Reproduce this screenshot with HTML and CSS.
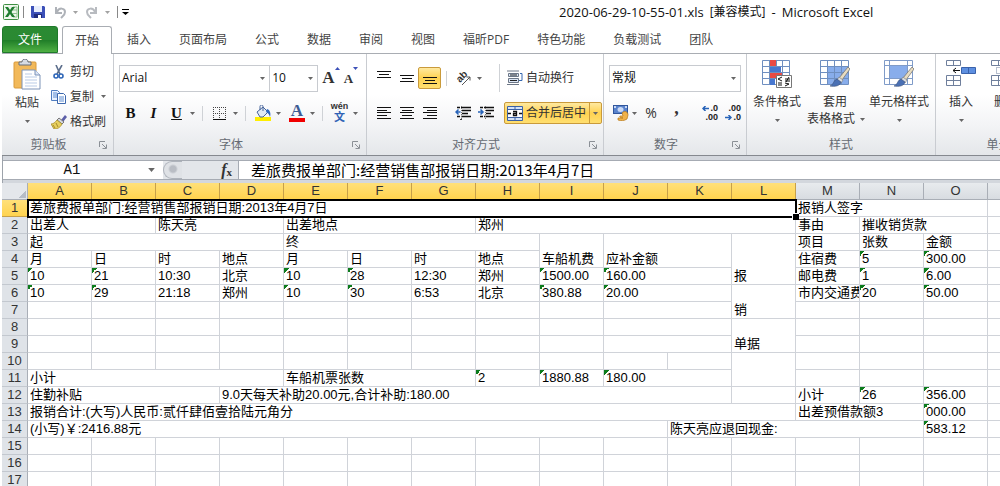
FILE: index.html
```html
<!DOCTYPE html>
<html lang="zh-CN">
<head>
<meta charset="utf-8">
<title>2020-06-29-10-55-01.xls - Microsoft Excel</title>
<link rel="stylesheet" href="styles.css">
</head>
<body>
<svg class="defs" aria-hidden="true">
  <symbol id="caret" viewBox="0 0 5 3"><path d="M0 0H5L2.5 3Z" fill="#666"/></symbol>
  <symbol id="launch" viewBox="0 0 8 8"><path d="M.5 6V.5H6M3 3l4 4M7.500 3.500V7.500H3.500" fill="none" stroke="#8b9096"/></symbol>
  <symbol id="brush" viewBox="0 0 20 20"><path d="M18 0l2 2-8 11-3-2Z" fill="#e8dcc0" stroke="#777" stroke-width=".8"/><path d="M9 10l4 3-2 3-4-3Z" fill="#d9dde2" stroke="#777" stroke-width=".6"/><path d="M7 12l4 3c-1 4-6 5-11 4 4-1 3-6 7-7Z" fill="#4a70b4" stroke="#3b5078" stroke-width=".6"/></symbol>
</svg>
<div class="window">
  <header class="titlebar">
    <div class="quick">
      <svg class="logo" width="16" height="16" viewBox="0 0 16 16"><rect x=".5" y=".5" width="15" height="15" rx="1" fill="#eef7ec" stroke="#3f8f43"/><path d="M10 3h4v10h-4M10 6h4M10 9.500h4" fill="none" stroke="#8fc28f"/><path d="M2 3h3l2 3 2-3h3L8.500 8l3.500 5H9L7 10l-2 3H2l3.500-5Z" fill="#1f7d30"/></svg>
      <span class="bar"></span>
      <button class="flat" aria-label="保存"><svg width="14" height="14" viewBox="0 0 14 14"><path d="M0 1h13l1 1v11H1l-1-1Z" fill="#3c50b8"/><path d="M3 1h8v6H3Z" fill="#e8eefc"/><path d="M3 9h8v4H3Z" fill="#1f2c7c"/><path d="M7 10h3v3H7Z" fill="#fff"/></svg></button>
      <button class="flat undo" aria-label="撤消"><svg width="12" height="13" viewBox="0 0 12 13"><path d="M2 1v6h6" fill="none" stroke="#aeb2b8" stroke-width="2"/><path d="M3 6c2-5 8-4 8 0 0 3-2 4-4 6" fill="none" stroke="#aeb2b8" stroke-width="2"/></svg></button>
      <svg class="caret pale" width="5" height="3"><use href="#caret"/></svg>
      <button class="flat redo" aria-label="恢复"><svg width="12" height="13" viewBox="0 0 12 13"><path d="M10 1v6H4" fill="none" stroke="#b8bbc0" stroke-width="2"/><path d="M9 6C7 1 1 2 1 6c0 3 2 4 4 6" fill="none" stroke="#b8bbc0" stroke-width="2"/></svg></button>
      <svg class="caret pale" width="5" height="3"><use href="#caret"/></svg>
      <span class="bar"></span>
      <button class="flat more" aria-label="自定义快速访问工具栏"><svg width="7" height="6" viewBox="0 0 7 6"><path d="M0 0h7v1H0ZM0 3h7L3.500 6Z"/></svg></button>
    </div>
    <h1 class="title"><span>2020-06-29-10-55-01.xls</span><small>[兼容模式]</small><span>-</span><span>Microsoft Excel</span></h1>
  </header>

  <nav class="tabs">
    <button class="tab file">文件</button>
    <button class="tab active">开始</button>
    <button class="tab">插入</button>
    <button class="tab">页面布局</button>
    <button class="tab">公式</button>
    <button class="tab">数据</button>
    <button class="tab">审阅</button>
    <button class="tab">视图</button>
    <button class="tab">福昕PDF</button>
    <button class="tab">特色功能</button>
    <button class="tab">负载测试</button>
    <button class="tab">团队</button>
  </nav>

  <div class="ribbon">
    <section class="group clipboard">
      <div class="body split">
        <button class="big paste">
          <svg width="28" height="31" viewBox="0 0 28 31"><rect x="1" y="3" width="22" height="26" rx="1" fill="#f2b95a" stroke="#d99a3a"/><path d="M6 6V3h3c0-4 6-4 6 0h3v3Z" fill="#d7dbe2" stroke="#666e7a"/><path d="M9 11h13l5 5v14H9Z" fill="#fff" stroke="#7d93b8"/><path d="M22 11v5h5" fill="#dbe5f5" stroke="#7d93b8"/><path d="M12 15h7M12 18h12M12 21h12M12 24h12M12 27h12" stroke="#b9cbe6"/></svg>
          <span>粘贴</span>
          <svg class="caret" width="5" height="3"><use href="#caret"/></svg>
        </button>
        <div class="stack">
          <button class="small"><svg width="16" height="14" viewBox="0 0 16 14"><path d="M5 0l4 9M11 0L6 9" stroke="#5d6f8c" stroke-width="1.600"/><circle cx="5" cy="11" r="2" fill="none" stroke="#2f66b8" stroke-width="1.600"/><circle cx="10" cy="11" r="2" fill="none" stroke="#2f66b8" stroke-width="1.600"/></svg>剪切</button>
          <button class="small"><svg width="16" height="14" viewBox="0 0 16 14"><path d="M.5.5h6l2 2v8h-8Z" fill="#eaf2ff" stroke="#4f7cc0"/><path d="M2 3h4M2 5h4M2 7h4" stroke="#5a8ad0"/><path d="M6.500 3.500h6l2 2v8h-8Z" fill="#fff" stroke="#3c67ad"/><path d="M8 7h5M8 9h5M8 11h5" stroke="#5a8ad0"/></svg>复制<svg class="caret" width="5" height="3"><use href="#caret"/></svg></button>
          <button class="small"><svg width="16" height="14" viewBox="0 0 16 14"><path d="M14 0l2 2-4 5-2-2Z" fill="#5c5fa8"/><path d="M8 3l5 4-2 2-5-4Z" fill="#d5d8e2" stroke="#777"/><path d="M6 5l5 4c-2 4-5 5-8 5L0 9c3 0 4-2 6-4Z" fill="#e7cf5e" stroke="#a58b2a" stroke-width=".8"/><path d="M2 10l2 3M5 8l2 4" stroke="#a58b2a"/></svg>格式刷</button>
        </div>
      </div>
      <footer><span>剪贴板</span><button class="launch" aria-label="剪贴板选项"><svg width="8" height="8"><use href="#launch"/></svg></button></footer>
    </section>

    <section class="group font">
      <div class="body">
        <div class="row">
          <div class="combo name"><select aria-label="字体"><option>Arial</option></select><svg class="caret" width="5" height="3"><use href="#caret"/></svg></div>
          <div class="combo size"><select aria-label="字号"><option>10</option></select><svg class="caret" width="5" height="3"><use href="#caret"/></svg></div>
          <button class="tool letter" aria-label="增大字号"><span class="grow">A</span><svg width="5" height="3" viewBox="0 0 5 3"><path d="M0 3h5L2.500 0Z" fill="#3c50b8"/></svg></button>
          <button class="tool letter" aria-label="减小字号"><span class="shrink">A</span><svg width="5" height="3" viewBox="0 0 5 3"><path d="M0 0h5L2.500 3Z" fill="#3c50b8"/></svg></button>
        </div>
        <div class="row">
          <button class="tool b">B</button>
          <button class="tool i">I</button>
          <button class="tool u">U</button>
          <button class="drop" aria-label="下划线选项"><svg width="5" height="3"><use href="#caret"/></svg></button>
          <span class="sep"></span>
          <button class="tool" aria-label="边框"><svg width="13" height="13" viewBox="0 0 13 13"><path d="M.5 0V12M6.500 0V12M12.500 0V12M0 .5H13M0 6.500H13" stroke="#444" stroke-dasharray="1 1"/><path d="M0 12.500H13" stroke="#111"/></svg></button>
          <button class="drop" aria-label="边框选项"><svg width="5" height="3"><use href="#caret"/></svg></button>
          <span class="sep"></span>
          <button class="tool" aria-label="填充颜色"><svg width="16" height="17" viewBox="0 0 16 17"><path d="M0 12h16v4H0Z" fill="#ffee00"/><path d="M2 7l6-5 5 5-5 5H5Z" fill="#dfe9f6" stroke="#47659a"/><path d="M5 5V1.500c0-2 3-2 3 0V6" fill="none" stroke="#47659a"/><path d="M12 4c3 1 4 4 3 8-1-3-2-4-4-5Z" fill="#2d68c4"/></svg></button>
          <button class="drop" aria-label="填充颜色选项"><svg width="5" height="3"><use href="#caret"/></svg></button>
          <button class="tool color" aria-label="字体颜色">A</button>
          <button class="drop" aria-label="字体颜色选项"><svg width="5" height="3"><use href="#caret"/></svg></button>
          <span class="sep"></span>
          <button class="tool pinyin"><span>wén</span><b>文</b></button>
          <button class="drop" aria-label="拼音选项"><svg width="5" height="3"><use href="#caret"/></svg></button>
        </div>
      </div>
      <footer><span>字体</span><button class="launch" aria-label="字体选项"><svg width="8" height="8"><use href="#launch"/></svg></button></footer>
    </section>

    <section class="group align">
      <div class="body">
        <div class="row">
          <button class="tool" aria-label="顶端对齐"><svg width="14" height="14" viewBox="0 0 14 14"><path d="M0 .5h14M2 3.500h10M0 6.500h14" stroke="#111"/></svg></button>
          <button class="tool" aria-label="垂直居中"><svg width="14" height="14" viewBox="0 0 14 14"><path d="M0 4.500h14M2 7.500h10M0 10.500h14" stroke="#111"/></svg></button>
          <button class="tool on" aria-label="底端对齐"><svg width="14" height="14" viewBox="0 0 14 14"><path d="M0 6.500h14M2 9.500h10M0 12.500h14" stroke="#111"/></svg></button>
          <span class="sep"></span>
          <button class="tool" aria-label="方向"><svg class="turn" width="16" height="16" viewBox="0 0 16 16"><text class="ab" x="1" y="10" transform="rotate(-45 6 8)">ab</text><path d="M6 15l8-8M10.500 7H14v3.500" fill="none" stroke="#555"/></svg></button>
          <button class="drop" aria-label="方向选项"><svg width="5" height="3"><use href="#caret"/></svg></button>
          <span class="sep wide"></span>
          <button class="labelled"><svg width="16" height="16" viewBox="0 0 16 16"><path d="M0 1h12M0 14.500h12" stroke="#6c7787"/><path d="M1.500 3.500h10v3h-10ZM1.500 8.500h10v4h-10Z" fill="#dbe6f5" stroke="#6c7787"/><path d="M3 5h7M3 10.500h7" stroke="#222"/><path d="M13 3.500h2v7h-3" fill="none" stroke="#3567b0"/></svg>自动换行</button>
        </div>
        <div class="row">
          <button class="tool" aria-label="左对齐"><svg width="14" height="12" viewBox="0 0 14 12"><path d="M0 .5h14M0 3.500h10M0 5.500h14M0 8.500h10M0 11.500h14" stroke="#111"/></svg></button>
          <button class="tool" aria-label="居中"><svg width="14" height="12" viewBox="0 0 14 12"><path d="M0 .5h14M2 3.500h10M0 5.500h14M2 8.500h10M0 11.500h14" stroke="#111"/></svg></button>
          <button class="tool" aria-label="右对齐"><svg width="14" height="12" viewBox="0 0 14 12"><path d="M0 .5h14M4 3.500h10M0 5.500h14M4 8.500h10M0 11.500h14" stroke="#111"/></svg></button>
          <span class="sep"></span>
          <button class="tool" aria-label="减少缩进量"><svg width="16" height="14" viewBox="0 0 16 14"><path d="M2 1.500h3M6 1.500h10M7 4.500h9M7 7.500h6M2 10.500h3M6 10.500h10M6 13v1" stroke="#111" stroke-width="1.600"/><path d="M6.500 0v14" stroke="#777" stroke-dasharray="1 1"/><path d="M5.500 6H1M3.500 3.500L1 6l2.500 2.500" fill="none" stroke="#2763b8" stroke-width="1.500"/></svg></button>
          <button class="tool" aria-label="增加缩进量"><svg width="16" height="14" viewBox="0 0 16 14"><path d="M2 1.500h3M6 1.500h10M8 4.500h8M8 7.500h5M2 10.500h3M6 10.500h10" stroke="#111" stroke-width="1.600"/><path d="M7.500 0v14" stroke="#777" stroke-dasharray="1 1"/><path d="M0 6h5M2.500 3.500L5 6 2.500 8.500" fill="none" stroke="#2763b8" stroke-width="1.500"/></svg></button>
          <button class="labelled on merge"><svg width="16" height="15" viewBox="0 0 16 15"><path d="M.5.5h15v14H.5ZM.5 3.500h15M.5 11.500h15M8 .5v3M8 11.500v3" fill="#d3e2f7" stroke="#3c62a5"/><path d="M1 4h14v7H1Z" fill="#fff"/><path d="M1 7.500h3M12 7.500h3" stroke="#111" stroke-width="1.500"/><path d="M6 5.500h3.500v4H6.500V7.500h3" fill="none" stroke="#111" stroke-width="1.300"/></svg>合并后居中<span class="arrow"><svg width="5" height="3"><use href="#caret"/></svg></span></button>
        </div>
      </div>
      <footer><span>对齐方式</span><button class="launch" aria-label="对齐选项"><svg width="8" height="8"><use href="#launch"/></svg></button></footer>
    </section>

    <section class="group number">
      <div class="body">
        <div class="row">
          <div class="combo format"><select aria-label="数字格式"><option>常规</option></select><svg class="caret" width="5" height="3"><use href="#caret"/></svg></div>
        </div>
        <div class="row">
          <button class="tool" aria-label="会计数字格式"><svg width="16" height="16" viewBox="0 0 16 16"><rect x=".5" y=".5" width="14" height="8" fill="#5a83cc" stroke="#30569c"/><ellipse cx="7.500" cy="4.500" rx="3" ry="2.500" fill="#c9d9f5"/><path d="M1 1h2v2H1ZM12 1h2v2h-2Z" fill="#c9d9f5"/><path d="M9 8c3-3 6-1 6 2l-1 4c-3 2-6 2-9 1v-2h5c-2 0-4-1-3-2h3Z" fill="#f0b24a" stroke="#b87817" stroke-width=".7"/></svg></button>
          <button class="drop" aria-label="会计格式选项"><svg width="5" height="3"><use href="#caret"/></svg></button>
          <button class="tool pct">%</button>
          <button class="tool comma">,</button>
          <span class="sep"></span>
          <button class="tool dec" aria-label="增加小数位数"><span><svg width="7" height="5" viewBox="0 0 7 5"><path d="M7 2.500H1M3.500 0L1 2.500 3.500 5" fill="none" stroke="#2763b8" stroke-width="1.500"/></svg>.0</span><span>.00</span></button>
          <button class="tool dec" aria-label="减少小数位数"><span>.00</span><span><svg width="7" height="5" viewBox="0 0 7 5"><path d="M0 2.500h6M3.500 0L6 2.500 3.500 5" fill="none" stroke="#2763b8" stroke-width="1.500"/></svg>.0</span></button>
        </div>
      </div>
      <footer><span>数字</span><button class="launch" aria-label="数字选项"><svg width="8" height="8"><use href="#launch"/></svg></button></footer>
    </section>

    <section class="group styles">
      <div class="body split">
        <button class="big"><svg width="30" height="29" viewBox="0 0 30 29"><path d="M.5 1.500h27v24H.5Z" fill="#fff" stroke="#6f8fc0"/><path d="M7 1h7v6H7ZM7 13h13v6H7Z" fill="#ea4a44"/><path d="M7 7h12v6H7ZM7 19h6v7H7Z" fill="#4777d0"/><path d="M.5 7.500h27M.5 13.500h27M.5 19.500h27M7.500 1v25M14.500 1v6M20.500 1v25" stroke="#6f8fc0" fill="none"/><path d="M14.500 16.500h15v12h-15Z" fill="#fff" stroke="#777"/><path d="M20 18l-4 2 4 2M16 24h4M16 26h4M23 20h5M23 22h5M27 18l-3 5M23 24l4 1-4 2" fill="none" stroke="#111"/></svg><span>条件格式</span><svg class="caret" width="5" height="3"><use href="#caret"/></svg></button>
        <button class="big"><svg width="30" height="29" viewBox="0 0 30 29"><path d="M.5 1.500h28v24H.5Z" fill="#fff"/><path d="M7 7h21v18H7Z" fill="#88adeb"/><path d="M.5 1.500h28v24H.5ZM.5 7.500h28M.5 13.500h28M.5 19.500h28M7.500 1v25M14.500 1v25M21.500 1v25" stroke="#6f8fc0" fill="none"/><use href="#brush" x="10" y="8" width="20" height="20"/></svg><span>套用</span><span class="line">表格格式<svg width="5" height="3"><use href="#caret"/></svg></span></button>
        <button class="big"><svg width="30" height="29" viewBox="0 0 30 29"><path d="M.5 1.500h28v24H.5Z" fill="#fff"/><path d="M.5 1.500h28v24H.5ZM.5 6.500h28M.5 19.500h28M5.500 1v25M23.500 1v25" stroke="#7f9bc8" fill="none"/><path d="M6 7h17v12H6Z" fill="#88adeb"/><use href="#brush" x="10" y="8" width="20" height="20"/></svg><span>单元格样式</span><svg class="caret" width="5" height="3"><use href="#caret"/></svg></button>
      </div>
      <footer><span>样式</span></footer>
    </section>

    <section class="group cells">
      <div class="body split">
        <button class="big"><svg width="30" height="29" viewBox="0 0 30 29"><path d="M.5 1.500h14v5H.5ZM.5 16.500h14v10H.5ZM7.500 1v5M7.500 16v10M.5 21.500h14" fill="#fff" stroke="#6f7f9c"/><path d="M15.500 8.500h14v6h-14Z" fill="#5d8fe0" stroke="#3a62ab"/><path d="M22.500 8v6" stroke="#3a62ab"/><path d="M14 11.500H7M10 9l-3 2.500 3 2.500" fill="none" stroke="#111"/></svg><span>插入</span><svg class="caret" width="5" height="3"><use href="#caret"/></svg></button>
        <button class="big delete"><svg width="30" height="29" viewBox="0 0 30 29"><path d="M.5 1.500h14v5H.5ZM.5 16.500h14v10H.5ZM7.500 1v5M7.500 16v10M.5 21.500h14" fill="#fff" stroke="#6f7f9c"/><path d="M5.500 8.500h14v6h-14Z" fill="#fff" stroke="#6f7f9c" stroke-dasharray="1 1"/></svg><span>删除</span><svg class="caret" width="5" height="3"><use href="#caret"/></svg></button>
      </div>
      <footer><span>单元格</span></footer>
    </section>
  </div>

  <div class="formulabar">
    <div class="namebox"><input aria-label="名称框" value="A1"><svg width="7" height="4"><use href="#caret"/></svg></div>
    <div class="fx"><span class="knob"></span><button class="flat" aria-label="插入函数"><i>f</i><small>x</small></button></div>
    <input class="formula" aria-label="编辑栏" value="差旅费报单部门:经营销售部报销日期:2013年4月7日">
  </div>

  <main class="sheet">
    <table class="grid">
      <colgroup><col class="rowhead"><col span="16"></colgroup>
      <thead>
        <tr><th class="corner"></th><th class="sel">A</th><th class="sel">B</th><th class="sel">C</th><th class="sel">D</th><th class="sel">E</th><th class="sel">F</th><th class="sel">G</th><th class="sel">H</th><th class="sel">I</th><th class="sel">J</th><th class="sel">K</th><th class="sel">L</th><th>M</th><th>N</th><th>O</th><th></th></tr>
      </thead>
      <tbody>
        <tr><th class="sel">1</th><td colspan="12" class="current">差旅费报单部门:经营销售部报销日期:2013年4月7日</td><td colspan="3">报销人签字</td><td></td></tr>
        <tr><th>2</th><td colspan="2">出差人</td><td colspan="2">陈天亮</td><td colspan="3">出差地点</td><td colspan="5">郑州</td><td>事由</td><td colspan="2">摧收销货款</td><td></td></tr>
        <tr><th>3</th><td colspan="4">起</td><td colspan="4">终</td><td rowspan="2">车船机费</td><td rowspan="2" colspan="2">应补金额</td><td rowspan="3">报</td><td>项目</td><td>张数</td><td>金额</td><td></td></tr>
        <tr><th>4</th><td>月</td><td>日</td><td>时</td><td>地点</td><td>月</td><td>日</td><td>时</td><td>地点</td><td>住宿费</td><td class="txt">5</td><td class="txt">300.00</td><td></td></tr>
        <tr><th>5</th><td class="txt">10</td><td class="txt">21</td><td>10:30</td><td>北京</td><td class="txt">10</td><td class="txt">28</td><td>12:30</td><td>郑州</td><td class="txt">1500.00</td><td colspan="2" class="txt">160.00</td><td>邮电费</td><td class="txt">1</td><td class="txt">6.00</td><td></td></tr>
        <tr><th>6</th><td class="txt">10</td><td class="txt">29</td><td>21:18</td><td>郑州</td><td class="txt">10</td><td class="txt">30</td><td>6:53</td><td>北京</td><td class="txt">380.88</td><td colspan="2" class="txt">20.00</td><td rowspan="2">销</td><td>市内交通费</td><td class="txt">20</td><td class="txt">50.00</td><td></td></tr>
        <tr><th>7</th><td></td><td></td><td></td><td></td><td></td><td></td><td></td><td></td><td></td><td colspan="2"></td><td></td><td></td><td></td><td></td></tr>
        <tr><th>8</th><td></td><td></td><td></td><td></td><td></td><td></td><td></td><td></td><td></td><td colspan="2"></td><td rowspan="2">单据</td><td></td><td></td><td></td><td></td></tr>
        <tr><th>9</th><td></td><td></td><td></td><td></td><td></td><td></td><td></td><td></td><td></td><td colspan="2"></td><td></td><td></td><td></td><td></td></tr>
        <tr><th>10</th><td></td><td></td><td></td><td></td><td></td><td></td><td></td><td></td><td></td><td></td><td></td><td rowspan="2"></td><td></td><td></td><td></td><td></td></tr>
        <tr><th>11</th><td colspan="4">小计</td><td colspan="3">车船机票张数</td><td class="txt">2</td><td class="txt">1880.88</td><td colspan="2" class="txt">180.00</td><td></td><td></td><td></td><td></td></tr>
        <tr><th>12</th><td colspan="3">住勤补贴</td><td colspan="8">9.0天每天补助20.00元,合计补助:180.00</td><td></td><td>小计</td><td class="txt">26</td><td class="txt">356.00</td><td></td></tr>
        <tr><th>13</th><td colspan="12">报销合计:(大写)人民币:贰仟肆佰壹拾陆元角分</td><td colspan="2">出差预借款额3</td><td class="txt">000.00</td><td></td></tr>
        <tr><th>14</th><td colspan="10">(小写)￥:2416.88元</td><td colspan="4">陈天亮应退回现金:</td><td class="txt">583.12</td><td></td></tr>
        <tr><th>15</th><td></td><td></td><td></td><td></td><td></td><td></td><td></td><td></td><td></td><td></td><td></td><td></td><td></td><td></td><td></td><td></td></tr>
        <tr><th>16</th><td></td><td></td><td></td><td></td><td></td><td></td><td></td><td></td><td></td><td></td><td></td><td></td><td></td><td></td><td></td><td></td></tr>
        <tr><th>17</th><td></td><td></td><td></td><td></td><td></td><td></td><td></td><td></td><td></td><td></td><td></td><td></td><td></td><td></td><td></td><td></td></tr>
      </tbody>
    </table>
  </main>
</div>
</body>
</html>
```
FILE: styles.css
```css
* { box-sizing: border-box; }
body { margin: 0; background: #fff; color: #333; font: 12px/16px "Open Sans", "Noto Sans CJK SC", sans-serif; overflow: hidden; }
button, input, select { margin: 0; padding: 0; border: 0; background: none; color: inherit; font: inherit; }
button { white-space: nowrap; }
svg { display: block; flex: none; }
.defs { width: 0; height: 0; position: absolute; }
.window { height: 100vh; padding-left: 2px; display: flex; flex-direction: column; overflow: hidden; }

/* title bar */
.titlebar { height: 26px; flex: none; display: flex; align-items: center; padding-bottom: 2px; }
.quick { display: flex; align-items: center; padding-left: 1px; width: 557px; flex: none; }
.bar { width: 1px; height: 12px; background: #888; margin: 0 7px 0 4px; }
.flat { display: flex; align-items: center; }
.undo { margin-left: 9px; }
.redo { margin-left: 8px; }
.caret.pale { opacity: .6; margin-left: 7px; }
.quick .pale + .bar { margin: 0 4px 0 7px; }
.title { display: flex; align-items: center; gap: 6px; margin: 0; font-size: 13px; font-weight: normal; color: #111; white-space: nowrap; }
.title small { font-size: 12px; }

/* tabs */
.tabs { height: 28px; flex: none; display: flex; border-bottom: 1px solid #a9adb3; }
.tab { padding: 0 14px; height: 27px; color: #444; }
.tab.file { width: 56px; margin-right: 4px; color: #fff; border-radius: 3px 3px 0 0; background: linear-gradient(#2b8a33, #2a8a32 50%, #1f7d28 52%, #4fb043); border: 1px solid #1f7a2b; }
.tab.active { height: 28px; margin-right: 1px; padding: 0 12px; border: 1px solid #a9adb3; border-bottom: 0; border-radius: 3px 3px 0 0; background: #fff; }

/* ribbon */
.ribbon { height: 102px; flex: none; display: flex; overflow: hidden; background: linear-gradient(#fff 40%, #f3f4f6 70%, #e4e7ea); border-bottom: 1px solid #85898f; }
.group { flex: none; display: flex; flex-direction: column; border-right: 1px solid #c9ccd1; }
.clipboard { width: 112px; }
.font { width: 253px; }
.align { width: 237px; }
.number { width: 143px; }
.styles { width: 189px; }
.cells { width: 138px; }
.body { height: 80px; padding: 8px 5px 0; display: flex; flex-direction: column; gap: 3px; }
.body.split { flex-direction: row; gap: 0; padding-top: 5px; }
.group footer { height: 21px; display: flex; align-items: center; color: #666b73; }
.group footer span { flex: 1; text-align: center; }
.launch { width: 18px; padding-left: 4px; }
.row { height: 32px; display: flex; align-items: center; }
.tool { width: 23px; height: 22px; display: flex; align-items: center; justify-content: center; flex: none; }
.drop { width: 9px; height: 22px; display: flex; align-items: center; justify-content: center; }
.sep { width: 1px; height: 15px; background: #cfd2d6; margin: 0 5px; }
.sep.wide { margin: 0 5px 0 15px; height: 28px; }
.on { background: linear-gradient(#ffe9a0, #ffd251 50%, #ffdf70); border: 1px solid #c99a3b; border-radius: 2px; }

.big { display: flex; flex-direction: column; align-items: center; color: #333; }
.big > span { margin-top: 6px; height: 16px; }
.big > .caret { margin-top: 9px; }
.paste > span { margin-top: 5px; }
.paste { width: 40px; }
.styles .split { padding-left: 0; padding-right: 0; }
.styles .big { width: 60px; }
.styles .big:nth-child(2) { width: 56px; }
.styles .big:nth-child(3) { width: 72px; }
.big > .line { margin-top: 1px; display: flex; align-items: center; gap: 5px; padding-left: 2px; }
.cells .big { width: 40px; }
.cells .delete { margin-left: 5px; }
.stack { padding: 0 0 0 4px; }
.small { height: 25px; display: flex; align-items: center; gap: 3px; }
.small .caret { margin-left: 4px; }

.combo { height: 27px; display: flex; align-items: center; border: 1px solid #c8cbd0; background: #fff; color: #111; }
.combo select { flex: 1; min-width: 0; height: 25px; padding: 0 2px; appearance: none; }
.combo .caret { margin: 0 4px; }
.combo.name { width: 152px; }
.combo.size { width: 48px; margin-right: 3px; border-left: 0; }
.combo.format { width: 134px; }
.letter { align-items: flex-start; font-family: "Liberation Serif", serif; font-weight: bold; width: 20px; }
.grow { font-size: 17px; line-height: 22px; }
.shrink { font-size: 13px; line-height: 24px; }
.b, .i, .u, .color { font: bold 15px/20px "Liberation Serif", serif; color: #111; }
.i { font-style: italic; }
.u { text-decoration: underline; }
.color { width: 16px; height: 18px; margin: 0 3px 0 6px; border-bottom: 4px solid #f00000; color: #3e5c94; font-size: 17px; line-height: 14px; }
.pinyin { flex-direction: column; font: 9px/9px "Liberation Sans", "Noto Sans CJK SC", sans-serif; }
.pinyin span { font-weight: bold; }
.pinyin b { font-size: 11px; line-height: 13px; color: #2f62b5; }
.turn { overflow: visible; }
.ab { font: bold 10px "Liberation Sans", sans-serif; fill: #333; }
.labelled { display: flex; align-items: center; gap: 3px; padding: 0 2px; height: 22px; color: #333; }
.merge { margin-left: 7px; padding-right: 0; }
.arrow { width: 12px; height: 20px; border-left: 1px solid #c99a3b; display: flex; align-items: center; justify-content: center; }
.pct { width: 28px; font-size: 14px; }
.comma { font: bold 18px/12px "Liberation Serif", serif; align-items: flex-start; }
.dec { flex-direction: column; align-items: flex-end; padding-right: 3px; font: bold 9px/9px "Liberation Sans", sans-serif; color: #222; }
.dec span { display: flex; align-items: center; gap: 1px; }

/* formula bar */
.formulabar { height: 27px; flex: none; display: flex; padding: 4px 0 3px; background: #d3d7dd; border-left: 1px solid #9da3ab; }
.namebox { width: 160px; display: flex; align-items: center; background: #fff; border: 1px solid #a6abb3; border-width: 1px 0; }
.namebox input { width: 138px; margin-right: 7px; text-align: center; color: #111; font: 14px/18px "Liberation Mono", monospace; }
.fx { width: 76px; display: flex; align-items: center; justify-content: space-between; background: #e3e6ea; border: 1px solid #a6abb3; border-left: 0; padding-right: 6px; }
.knob { width: 19px; height: 18px; border: 1px solid #aeb3bb; border-right: 0; border-radius: 9px 0 0 9px; background: radial-gradient(circle at 9px 7px, #b9bdc4 3px, #dfe2e6 5px); }
.fx button { font: bold 16px/16px "Liberation Serif", serif; color: #333; }
.fx small { font-size: 11px; padding-top: 4px; }
.formula { flex: 1; min-width: 0; padding-left: 12px; background: #fff; border: solid #a6abb3; border-width: 1px 0; color: #000; font: 15px/18px "Noto Sans CJK SC", sans-serif; }

/* worksheet */
.sheet { flex: 1; min-height: 0; overflow: hidden; }
.grid { width: 1050px; table-layout: fixed; border-collapse: separate; border-spacing: 0; font: 13px/16px "Liberation Sans", "Noto Sans CJK SC", sans-serif; color: #000; }
.grid col { width: 64px; }
.grid .rowhead { width: 26px; }
.grid td, .grid th { height: 17px; padding: 0; border: solid #d0d3d9; border-width: 0 1px 1px 0; line-height: 16px; }
.grid td { padding-left: 2px; vertical-align: bottom; white-space: nowrap; overflow: hidden; }
.grid th { font-weight: normal; color: #333; background: #dfe3e8; border-color: #a9aeb6; }
.grid tbody th { border-bottom-color: #c3c8cf; }
.grid thead th { background: linear-gradient(#e8ebee, #d8dce1); }
.grid thead .sel, .grid tbody .sel { background: linear-gradient(#ffe07a, #ffd34f); border-color: #c6a04a; }
.grid thead .corner { background: linear-gradient(135deg, transparent 65%, #b6bcc5 65%) 14px 5px / 10px 10px no-repeat #e4e7eb; }
.grid td.txt { background: linear-gradient(135deg, #0c7c1c 50%, transparent 50%) 0 0 / 5px 5px no-repeat; }
.grid td.current { position: relative; overflow: visible; }
.current::before { content: ""; position: absolute; inset: -1px -2px -2px -1px; border: 2px solid #000; }
.current::after { content: ""; position: absolute; right: -4px; bottom: -4px; width: 6px; height: 6px; background: #000; border: solid #fff; border-width: 1px 0 0 1px; }
```
